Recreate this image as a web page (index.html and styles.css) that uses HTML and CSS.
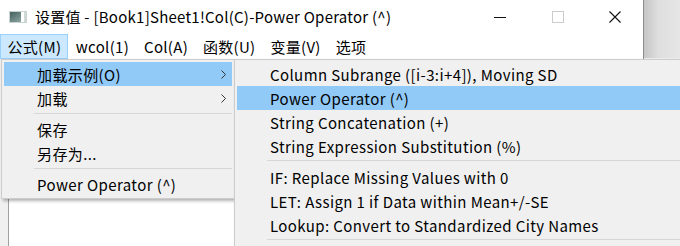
FILE: index.html
```html
<!DOCTYPE html>
<html>
<head>
  <title>设置值</title>
  <link rel="stylesheet" href="styles.css">
</head>
<body>
  <div class="screen">
    <div class="window">
      <div class="titlebar">
        <svg class="app-icon" width="18" height="12" viewBox="0 0 18 12">
          <defs>
            <linearGradient id="ig" x1="0" y1="0" x2="1" y2="1">
              <stop offset="0" stop-color="#3f5d5a"/>
              <stop offset="1" stop-color="#9fb5b2"/>
            </linearGradient>
          </defs>
          <rect x="0.5" y="0.5" width="17" height="11" fill="url(#ig)" stroke="#c9d3d2"/>
          <rect x="12" y="1" width="3" height="10" fill="#ffffff"/>
          <rect x="15" y="1" width="2" height="10" fill="#cfdad8"/>
        </svg>
        <div class="title">设置值 - [Book1]Sheet1!Col(C)-Power Operator (^)</div>
        <div class="controls">
          <span class="ctl"><svg width="12" height="12" viewBox="0 0 12 12"><path d="M0 6.5H12" stroke="#111" stroke-width="1"/></svg></span>
          <span class="ctl"><svg width="12" height="12" viewBox="0 0 12 12"><rect x="0.5" y="0.5" width="11" height="11" fill="none" stroke="#cccccc"/></svg></span>
          <span class="ctl"><svg width="12" height="12" viewBox="0 0 12 12"><path d="M0.5 0.5L11.5 11.5M11.5 0.5L0.5 11.5" stroke="#111" stroke-width="1.1"/></svg></span>
        </div>
      </div>
      <div class="menubar">
        <span class="mb-item open">公式(M)</span>
        <span class="mb-item">wcol(1)</span>
        <span class="mb-item">Col(A)</span>
        <span class="mb-item">函数(U)</span>
        <span class="mb-item">变量(V)</span>
        <span class="mb-item">选项</span>
      </div>
      <div class="win-body">
        <div class="panel"></div>
      </div>
    </div>
    <div class="desk"></div>

    <div class="menu menu-main">
      <div class="item hl">加载示例(O)<svg class="chev" width="5" height="9" viewBox="0 0 5 9"><path d="M0.5 0.5L4.5 4.5L0.5 8.5" fill="none" stroke="#333" stroke-width="1"/></svg></div>
      <div class="item">加载<svg class="chev" width="5" height="9" viewBox="0 0 5 9"><path d="M0.5 0.5L4.5 4.5L0.5 8.5" fill="none" stroke="#333" stroke-width="1"/></svg></div>
      <div class="sep"></div>
      <div class="item">保存</div>
      <div class="item">另存为...</div>
      <div class="sep"></div>
      <div class="item">Power Operator (^)</div>
    </div>

    <div class="menu menu-sub">
      <div class="item">Column Subrange ([i-3:i+4]), Moving SD</div>
      <div class="item hl">Power Operator (^)</div>
      <div class="item">String Concatenation (+)</div>
      <div class="item">String Expression Substitution (%)</div>
      <div class="sep"></div>
      <div class="item">IF: Replace Missing Values with 0</div>
      <div class="item">LET: Assign 1 if Data within Mean+/-SE</div>
      <div class="item">Lookup: Convert to Standardized City Names</div>
      <div class="sep"></div>
    </div>
  </div>
</body>
</html>
```

FILE: styles.css
```css
body {
  margin: 0;
  font-family: "Noto Sans CJK SC", "Noto Sans", sans-serif;
  font-size: 15px;
  color: #000;
}
.screen {
  position: relative;
  width: 680px;
  height: 246px;
  overflow: hidden;
  display: flex;
  background: #f0f0f0;
}
.window {
  width: 643px;
  display: flex;
  flex-direction: column;
  background: #fff;
  border-right: 1px solid #8c8c8c;
}
.desk {
  flex: 1;
  height: 58px;
  background: linear-gradient(to right, #c6c6c6, #dedede 40%, #e6e6e6);
}
.titlebar {
  height: 34px;
  display: flex;
  align-items: center;
}
.app-icon {
  margin-left: 9px;
  margin-right: 8px;
}
.title {
  flex: 1;
  white-space: nowrap;
  line-height: 20px;
  letter-spacing: 0.25px;
}
.controls {
  display: flex;
  height: 100%;
}
.ctl {
  width: 58px;
  display: flex;
  align-items: center;
  justify-content: center;
}
.controls .ctl:last-child {
  width: 56px;
}
.menubar {
  height: 25px;
  display: flex;
  align-items: stretch;
  letter-spacing: 0.3px;
}
.mb-item {
  padding: 0 6.5px;
  display: flex;
  align-items: center;
  border: 1px solid transparent;
  white-space: nowrap;
}
.mb-item.open {
  padding: 0 6px 0 6.5px;
  background: #cce8ff;
  border-color: #99d1ff;
}
.win-body {
  flex: 1;
  background: #f0f0f0;
  padding: 6px 0 0 8px;
  display: flex;
}
.panel {
  flex: 1;
  background: #fff;
  border-left: 1px solid #a0a0a0;
  border-top: 1px solid #a0a0a0;
}
.menu {
  position: absolute;
  top: 59px;
  background: #f0f0f0;
  border: 1px solid #cccccc;
  padding: 2px;
  box-shadow: 2px 2px 3px rgba(0, 0, 0, 0.3);
}
.menu-main {
  left: 1px;
  width: 228px;
}
.menu-sub {
  left: 234px;
  width: 460px;
}
.item {
  height: 24px;
  display: flex;
  align-items: center;
  padding-left: 33px;
  position: relative;
  white-space: nowrap;
  letter-spacing: 0.4px;
}
.item.hl {
  background: #91c9f7;
}
.chev {
  position: absolute;
  right: 6px;
  top: 8px;
}
.sep {
  height: 1px;
  background: #d7d7d7;
  margin: 3px 0 3px 30px;
}
.menu-sub .sep {
  margin: 2px 0 4px 30px;
}
```
